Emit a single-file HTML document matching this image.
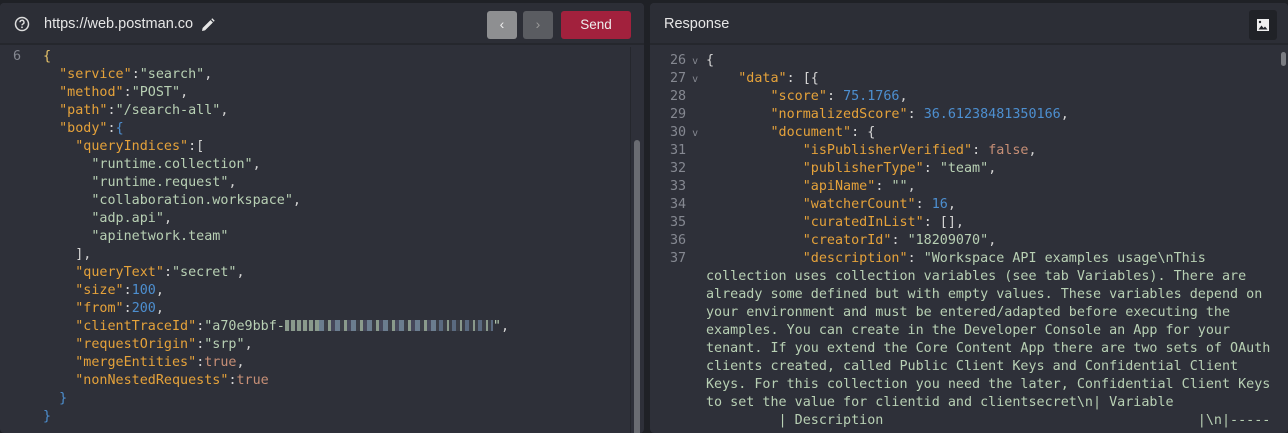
<!DOCTYPE html>
<html><head><meta charset="utf-8"><style>
*{margin:0;padding:0;box-sizing:border-box}
body{width:1288px;height:423px;background:#1f2126;overflow:hidden;position:relative;font-family:"Liberation Sans",sans-serif}
.panel{position:absolute;top:3px;height:430px;background:#2e3039;border-radius:4px;overflow:hidden}
.hdr{position:absolute;left:0;right:0;top:0;height:42px;background:#2c2e36;border-bottom:2px solid #25272d}
.code{position:absolute;font-family:"DejaVu Sans Mono",monospace;font-size:13.4px;line-height:18px;color:#d4d4d4;white-space:pre}
.k{color:#e5a23a}.s{color:#b8d0b4}.n{color:#4d8fd0}.b{color:#c78f76}.y{color:#e8c46a}
.ln{position:absolute;font-family:"DejaVu Sans Mono",monospace;font-size:13.4px;line-height:18px;color:#858891;white-space:pre}
.ar{font-size:10px;line-height:0}
.blk{display:inline-block;height:11px;vertical-align:-1px}
</style></head><body>
<div class="panel" style="left:0;width:644px">
 <div class="hdr">
  <svg style="position:absolute;left:14px;top:13px" width="16" height="16" viewBox="0 0 16 16"><circle cx="8" cy="8" r="6.5" fill="none" stroke="#ddd" stroke-width="1.5"/><path d="M6 6.3a2 2 0 1 1 2.8 1.8c-.6.3-.8.7-.8 1.3" fill="none" stroke="#ddd" stroke-width="1.4"/><circle cx="8" cy="11.3" r=".9" fill="#ddd"/></svg>
  <div style="position:absolute;left:44px;top:13px;color:#e6e6e6;font-size:14.5px">https://web.postman.co</div>
  <svg style="position:absolute;left:201px;top:15px" width="14" height="14" viewBox="0 0 14 14"><path d="M1 13l.6-3L9.5 2.1l2.4 2.4L4 12.4z M10.3 1.3l1-1 2.4 2.4-1 1z" fill="#e6e6e6"/></svg>
  <div style="position:absolute;left:487px;top:8px;width:30px;height:28px;background:#8e8f91;border-radius:3px;color:#eee;text-align:center;line-height:27px;font-size:14px">‹</div>
  <div style="position:absolute;left:523px;top:8px;width:30px;height:28px;background:#5a5c61;border-radius:3px;color:#999;text-align:center;line-height:27px;font-size:14px">›</div>
  <div style="position:absolute;left:561px;top:8px;width:70px;height:28px;background:#a2213d;border-radius:3px;color:#eee;text-align:center;line-height:27px;font-size:13.5px">Send</div>
 </div>
 <div style="position:absolute;left:630px;top:44px;width:1px;height:400px;background:#25272d"></div>
 <div style="position:absolute;left:634px;top:137px;width:6px;height:300px;background:#6a6c72;border-radius:3px"></div>
 <div class="ln" style="left:13px;top:45px">6</div>
 <div class="code" style="left:43px;top:45px"><span class="y">{</span>
  <span class="k">"service"</span>:<span class="s">"search"</span>,
  <span class="k">"method"</span>:<span class="s">"POST"</span>,
  <span class="k">"path"</span>:<span class="s">"/search-all"</span>,
  <span class="k">"body"</span>:<span class="n">{</span>
    <span class="k">"queryIndices"</span>:[
      <span class="s">"runtime.collection"</span>,
      <span class="s">"runtime.request"</span>,
      <span class="s">"collaboration.workspace"</span>,
      <span class="s">"adp.api"</span>,
      <span class="s">"apinetwork.team"</span>
    ],
    <span class="k">"queryText"</span>:<span class="s">"secret"</span>,
    <span class="k">"size"</span>:<span class="n">100</span>,
    <span class="k">"from"</span>:<span class="n">200</span>,
    <span class="k">"clientTraceId"</span>:<span class="s">"a70e9bbf-<span class="blk" style="width:34px;background:repeating-linear-gradient(90deg,#8a9a8c 0 4px,#3a3d46 4px 6px)"></span><span class="blk" style="width:120px;background:repeating-linear-gradient(90deg,#6b7d8f 0 5px,#3a3d46 5px 9px,#8a9a8c 9px 12px,#45475a 12px 16px)"></span><span class="blk" style="width:54px;background:repeating-linear-gradient(90deg,#5a6a80 0 4px,#3a3d46 4px 8px,#8a9a8c 8px 10px,#3a3d46 10px 13px)"></span>"</span>,
    <span class="k">"requestOrigin"</span>:<span class="s">"srp"</span>,
    <span class="k">"mergeEntities"</span>:<span class="b">true</span>,
    <span class="k">"nonNestedRequests"</span>:<span class="b">true</span>
  <span class="n">}</span>
<span class="n">}</span></div>
</div>
<div class="panel" style="left:650px;width:638px">
 <div class="hdr">
  <div style="position:absolute;left:14px;top:13px;color:#e6e6e6;font-size:14.5px">Response</div>
  <div style="position:absolute;left:599px;top:7px;width:28px;height:30px;background:#202227;border-radius:3px"></div>
  <svg style="position:absolute;left:606px;top:15px" width="14" height="14" viewBox="0 0 14 14"><rect x="1" y="1" width="12" height="12" fill="#eee"/><path d="M2.5 11.5l3-4 2 2.5 1.5-1.5 2.5 3z" fill="#202227"/><circle cx="4" cy="4" r="1.2" fill="#202227"/></svg>
 </div>
 <div style="position:absolute;left:631px;top:49px;width:5px;height:14px;background:#7a7c82;border-radius:3px"></div>
 <div class="ln" style="left:20px;top:49px">26<span class="ar"> v</span>
27<span class="ar"> v</span>
28
29
30<span class="ar"> v</span>
31
32
33
34
35
36
37</div>
 <div class="code" style="left:56px;top:49px">{
    <span class="k">"data"</span>: [{
        <span class="k">"score"</span>: <span class="n">75.1766</span>,
        <span class="k">"normalizedScore"</span>: <span class="n">36.61238481350166</span>,
        <span class="k">"document"</span>: {
            <span class="k">"isPublisherVerified"</span>: <span class="b">false</span>,
            <span class="k">"publisherType"</span>: <span class="s">"team"</span>,
            <span class="k">"apiName"</span>: <span class="s">""</span>,
            <span class="k">"watcherCount"</span>: <span class="n">16</span>,
            <span class="k">"curatedInList"</span>: [],
            <span class="k">"creatorId"</span>: <span class="s">"18209070"</span>,
            <span class="k">"description"</span>: <span class="s">"Workspace API examples usage\nThis
collection uses collection variables (see tab Variables). There are
already some defined but with empty values. These variables depend on
your environment and must be entered/adapted before executing the
examples. You can create in the Developer Console an App for your
tenant. If you extend the Core Content App there are two sets of OAuth
clients created, called Public Client Keys and Confidential Client
Keys. For this collection you need the later, Confidential Client Keys
to set the value for clientid and clientsecret\n| Variable
         | Description                                       |\n|-----</span></div>
</div>
</body></html>
